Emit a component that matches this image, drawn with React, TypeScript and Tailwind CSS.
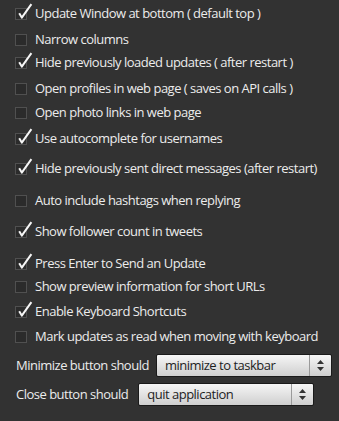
type Option = { label: string; checked: boolean; mt: string };

const options: Option[] = [
  { label: "Update Window at bottom ( default top )", checked: true, mt: "mt-[3px]" },
  { label: "Narrow columns", checked: false, mt: "mt-[6px]" },
  { label: "Hide previously loaded updates ( after restart )", checked: true, mt: "mt-[3px]" },
  { label: "Open profiles in web page ( saves on API calls )", checked: false, mt: "mt-[6px]" },
  { label: "Open photo links in web page", checked: false, mt: "mt-[4px]" },
  { label: "Use autocomplete for usernames", checked: true, mt: "mt-[6px]" },
  { label: "Hide previously sent direct messages (after restart)", checked: true, mt: "mt-[10px]" },
  { label: "Auto include hashtags when replying", checked: false, mt: "mt-[12px]" },
  { label: "Show follower count in tweets", checked: true, mt: "mt-[11px]" },
  { label: "Press Enter to Send an Update", checked: true, mt: "mt-[12px]" },
  { label: "Show preview information for short URLs", checked: false, mt: "mt-[3px]" },
  { label: "Enable Keyboard Shortcuts", checked: true, mt: "mt-[5px]" },
  { label: "Mark updates as read when moving with keyboard", checked: false, mt: "mt-[5px]" },
];

function Box({ checked }: { checked: boolean }) {
  return (
    <span className="relative mt-[5px] h-[12px] w-[12px] shrink-0 border border-[#505050] bg-[#2b2b2b]">
      {checked && (
        <svg className="absolute left-0 -top-[6px]" width="18" height="18" viewBox="0 0 18 18">
          <path
            d="M3.2 10.2 L5.8 14.6 L15.4 1.2"
            fill="none"
            stroke="#f6f6f6"
            strokeWidth="2"
            strokeLinejoin="round"
          />
        </svg>
      )}
    </span>
  );
}

function Select({ value }: { value: string }) {
  return (
    <div className="flex h-[23px] w-[176px] items-stretch rounded-[2px] border border-[#1a1a1a] bg-gradient-to-b from-[#f6f6f6] to-[#cfcfcf] text-[13px] text-[#1e1e1e]">
      <span className="flex flex-1 items-center pl-[8px] leading-none">{value}</span>
      <span className="flex w-[22px] flex-col items-center justify-center gap-[3px] border-l border-[#9a9a9a]">
        <svg width="7" height="4" viewBox="0 0 7 4">
          <path d="M0 4 L3.5 0 L7 4 Z" fill="#333" />
        </svg>
        <svg width="7" height="4" viewBox="0 0 7 4">
          <path d="M0 0 L3.5 4 L7 0 Z" fill="#333" />
        </svg>
      </span>
    </div>
  );
}

export default function App() {
  return (
    <div
      className="h-[421px] w-[339px] overflow-hidden bg-[#323232] text-[13px] tracking-[-0.5px] text-[#ececec]"
      style={{ fontFamily: '"Open Sans", "Noto Sans", sans-serif' }}
    >
      <div className="flex flex-col pl-[15px]">
        {options.map((o) => (
          <label key={o.label} className={`flex items-start gap-[8px] ${o.mt} h-[20px] leading-[20px]`}>
            <Box checked={o.checked} />
            <span className="whitespace-nowrap">{o.label}</span>
          </label>
        ))}
      </div>
      <div className="mt-[8px] flex items-center gap-[7px] pl-[16px]">
        <span className="whitespace-nowrap">Minimize button should</span>
        <Select value="minimize to taskbar" />
      </div>
      <div className="mt-[6px] flex items-center gap-[10px] pl-[16px]">
        <span className="whitespace-nowrap">Close button should</span>
        <Select value="quit application" />
      </div>
    </div>
  );
}
